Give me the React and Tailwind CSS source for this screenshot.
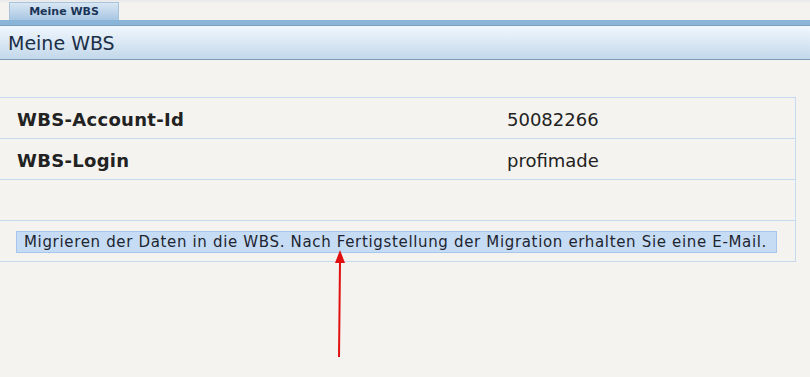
export default function App() {
  const font = { fontFamily: '"DejaVu Sans", Verdana, sans-serif' };
  return (
    <div className="relative w-[810px] h-[377px] overflow-hidden bg-[#f5f3ef]" style={font}>
      {/* top tab strip */}
      <div className="h-[20px] flex items-end bg-[linear-gradient(#e6e8ea_0px,#f3f2ef_3px,#f5f3ef_100%)] pl-[9px]">
        <div className="w-[110px] h-[18px] border border-b-0 border-[#a9c3db] bg-[linear-gradient(#d9e7f4,#a7c6e2)] flex items-center justify-center text-[11px] font-bold text-[#1c3557] leading-none">
          Meine WBS
        </div>
      </div>
      <div className="h-[6px] bg-[#8ab4d8] border-b border-[#7c9fbf]" />
      <div className="h-[34px] bg-[linear-gradient(#f1f7fe,#c3d8ea)] border-b border-[#7b98b4] flex items-center pl-[8px] pt-[2px] text-[19px] text-[#1b2f48] leading-none">
        Meine WBS
      </div>
      <div className="h-[37px]" />
      <div className="w-[796px] border border-l-0 border-[#c5d9ef] text-[#222]">
        <div className="h-[41px] flex items-center border-b border-[#c5d9ef] text-[18px] pt-[3px]">
          <div className="w-[507px] pl-[17px] font-bold tracking-[0.3px]">WBS-Account-Id</div>
          <div>50082266</div>
        </div>
        <div className="h-[41px] flex items-center border-b border-[#c5d9ef] text-[18px] pt-[3px]">
          <div className="w-[507px] pl-[17px] font-bold tracking-[0.3px]">WBS-Login</div>
          <div>profimade</div>
        </div>
        <div className="h-[41px] border-b border-[#c5d9ef]" />
        <div className="h-[40px] flex items-center pl-[16px] pt-[2px]">
          <div className="w-[761px] h-[22px] bg-[#c6dcf5] border border-[#a6c6ec] flex items-center pl-[7px] pt-[1px] text-[15px] tracking-[0.66px] text-[#1e2530] leading-none whitespace-nowrap">
            Migrieren der Daten in die WBS. Nach Fertigstellung der Migration erhalten Sie eine E-Mail.
          </div>
        </div>
      </div>
      <svg className="absolute left-0 top-0" width="810" height="377" viewBox="0 0 810 377">
        <line x1="339" y1="357" x2="340" y2="262" stroke="#e01010" strokeWidth="2" />
        <polygon points="340,250 335,263 345,263" fill="#e01010" />
      </svg>
    </div>
  );
}
